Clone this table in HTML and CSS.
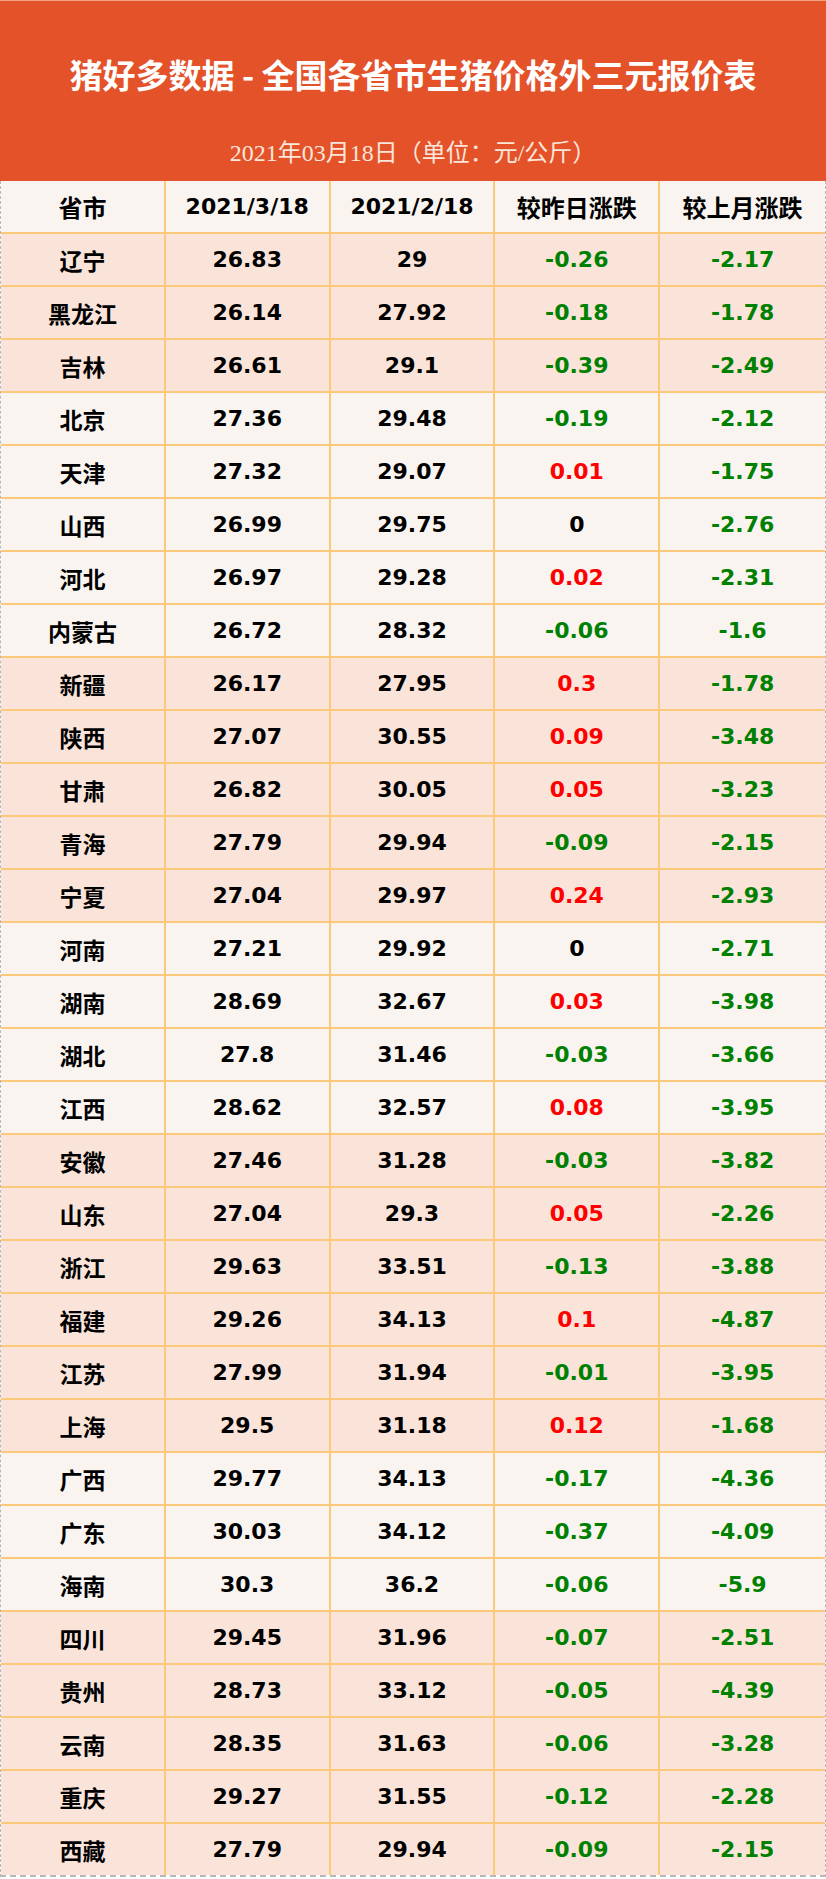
FILE: index.html
```html
<!DOCTYPE html>
<html lang="zh">
<head>
<meta charset="utf-8">
<title>猪好多数据</title>
<link rel="stylesheet" href="styles.css">
</head>
<body>
<div class="page">
  <header class="banner">
    <h1 class="title">猪好多数据 - 全国各省市生猪价格外三元报价表</h1>
    <p class="subtitle">2021年03月18日（单位：元/公斤）</p>
  </header>
  <div class="table">
    <div class="row head"><div class="c p">省市</div><div class="c n">2021/3/18</div><div class="c n">2021/2/18</div><div class="c p">较昨日涨跌</div><div class="c p">较上月涨跌</div></div>
    <div class="row pe"><div class="c p">辽宁</div><div class="c n">26.83</div><div class="c n">29</div><div class="c n g">-0.26</div><div class="c n g">-2.17</div></div>
    <div class="row pe"><div class="c p">黑龙江</div><div class="c n">26.14</div><div class="c n">27.92</div><div class="c n g">-0.18</div><div class="c n g">-1.78</div></div>
    <div class="row pe"><div class="c p">吉林</div><div class="c n">26.61</div><div class="c n">29.1</div><div class="c n g">-0.39</div><div class="c n g">-2.49</div></div>
    <div class="row li"><div class="c p">北京</div><div class="c n">27.36</div><div class="c n">29.48</div><div class="c n g">-0.19</div><div class="c n g">-2.12</div></div>
    <div class="row li"><div class="c p">天津</div><div class="c n">27.32</div><div class="c n">29.07</div><div class="c n r">0.01</div><div class="c n g">-1.75</div></div>
    <div class="row li"><div class="c p">山西</div><div class="c n">26.99</div><div class="c n">29.75</div><div class="c n">0</div><div class="c n g">-2.76</div></div>
    <div class="row li"><div class="c p">河北</div><div class="c n">26.97</div><div class="c n">29.28</div><div class="c n r">0.02</div><div class="c n g">-2.31</div></div>
    <div class="row li"><div class="c p">内蒙古</div><div class="c n">26.72</div><div class="c n">28.32</div><div class="c n g">-0.06</div><div class="c n g">-1.6</div></div>
    <div class="row pe"><div class="c p">新疆</div><div class="c n">26.17</div><div class="c n">27.95</div><div class="c n r">0.3</div><div class="c n g">-1.78</div></div>
    <div class="row pe"><div class="c p">陕西</div><div class="c n">27.07</div><div class="c n">30.55</div><div class="c n r">0.09</div><div class="c n g">-3.48</div></div>
    <div class="row pe"><div class="c p">甘肃</div><div class="c n">26.82</div><div class="c n">30.05</div><div class="c n r">0.05</div><div class="c n g">-3.23</div></div>
    <div class="row pe"><div class="c p">青海</div><div class="c n">27.79</div><div class="c n">29.94</div><div class="c n g">-0.09</div><div class="c n g">-2.15</div></div>
    <div class="row pe"><div class="c p">宁夏</div><div class="c n">27.04</div><div class="c n">29.97</div><div class="c n r">0.24</div><div class="c n g">-2.93</div></div>
    <div class="row li"><div class="c p">河南</div><div class="c n">27.21</div><div class="c n">29.92</div><div class="c n">0</div><div class="c n g">-2.71</div></div>
    <div class="row li"><div class="c p">湖南</div><div class="c n">28.69</div><div class="c n">32.67</div><div class="c n r">0.03</div><div class="c n g">-3.98</div></div>
    <div class="row li"><div class="c p">湖北</div><div class="c n">27.8</div><div class="c n">31.46</div><div class="c n g">-0.03</div><div class="c n g">-3.66</div></div>
    <div class="row li"><div class="c p">江西</div><div class="c n">28.62</div><div class="c n">32.57</div><div class="c n r">0.08</div><div class="c n g">-3.95</div></div>
    <div class="row pe"><div class="c p">安徽</div><div class="c n">27.46</div><div class="c n">31.28</div><div class="c n g">-0.03</div><div class="c n g">-3.82</div></div>
    <div class="row pe"><div class="c p">山东</div><div class="c n">27.04</div><div class="c n">29.3</div><div class="c n r">0.05</div><div class="c n g">-2.26</div></div>
    <div class="row pe"><div class="c p">浙江</div><div class="c n">29.63</div><div class="c n">33.51</div><div class="c n g">-0.13</div><div class="c n g">-3.88</div></div>
    <div class="row pe"><div class="c p">福建</div><div class="c n">29.26</div><div class="c n">34.13</div><div class="c n r">0.1</div><div class="c n g">-4.87</div></div>
    <div class="row pe"><div class="c p">江苏</div><div class="c n">27.99</div><div class="c n">31.94</div><div class="c n g">-0.01</div><div class="c n g">-3.95</div></div>
    <div class="row pe"><div class="c p">上海</div><div class="c n">29.5</div><div class="c n">31.18</div><div class="c n r">0.12</div><div class="c n g">-1.68</div></div>
    <div class="row li"><div class="c p">广西</div><div class="c n">29.77</div><div class="c n">34.13</div><div class="c n g">-0.17</div><div class="c n g">-4.36</div></div>
    <div class="row li"><div class="c p">广东</div><div class="c n">30.03</div><div class="c n">34.12</div><div class="c n g">-0.37</div><div class="c n g">-4.09</div></div>
    <div class="row li"><div class="c p">海南</div><div class="c n">30.3</div><div class="c n">36.2</div><div class="c n g">-0.06</div><div class="c n g">-5.9</div></div>
    <div class="row pe"><div class="c p">四川</div><div class="c n">29.45</div><div class="c n">31.96</div><div class="c n g">-0.07</div><div class="c n g">-2.51</div></div>
    <div class="row pe"><div class="c p">贵州</div><div class="c n">28.73</div><div class="c n">33.12</div><div class="c n g">-0.05</div><div class="c n g">-4.39</div></div>
    <div class="row pe"><div class="c p">云南</div><div class="c n">28.35</div><div class="c n">31.63</div><div class="c n g">-0.06</div><div class="c n g">-3.28</div></div>
    <div class="row pe"><div class="c p">重庆</div><div class="c n">29.27</div><div class="c n">31.55</div><div class="c n g">-0.12</div><div class="c n g">-2.28</div></div>
    <div class="row pe"><div class="c p">西藏</div><div class="c n">27.79</div><div class="c n">29.94</div><div class="c n g">-0.09</div><div class="c n g">-2.15</div></div>
  </div>
</div>
</body>
</html>
```

FILE: styles.css
```css
* { box-sizing: border-box; }
html, body { margin: 0; padding: 0; background: #ffffff; }
.page { width: 826px; }
.banner {
  height: 181px;
  background: #e4522a;
  border-top: 1px solid #f0a283;
  display: flex;
  flex-direction: column;
  align-items: center;
}
.title {
  margin: 52px 0 0 0;
  height: 42px;
  line-height: 42px;
  font-family: "Noto Sans CJK SC", sans-serif;
  font-weight: 700;
  font-size: 33px;
  color: #ffffff;
  white-space: nowrap;
}
.subtitle {
  margin: 43px 0 0 0;
  height: 30px;
  line-height: 30px;
  font-family: "Liberation Serif", "Noto Sans CJK SC", serif;
  font-size: 24px;
  color: #fbe6da;
  white-space: nowrap;
}
.table {
  border-left: 1px dashed #b8b8b8;
  border-right: 1px dashed #b8b8b8;
  border-bottom: 2px dashed #b8b8b8;
}
.row {
  display: grid;
  grid-template-columns: repeat(5, 1fr);
  height: 53px;
  border-bottom: 2px solid #fcc97b;
}
.row:last-child { border-bottom: 0; height: 51px; }
.head, .li { background: #f9f4f0; }
.pe { background: #fae4d9; }
.c {
  display: flex;
  align-items: center;
  justify-content: center;
  border-right: 2px solid #fcc97b;
  color: #000000;
  font-weight: 700;
  white-space: nowrap;
}
.c:last-child { border-right: 0; }
.p {
  font-family: "Noto Sans CJK SC", sans-serif;
  font-size: 23px;
}
.head .p { font-size: 24px; }
.n {
  font-family: "DejaVu Sans", "Noto Sans CJK SC", sans-serif;
  font-size: 22px;
}
.g { color: #008000; }
.r { color: #ff0000; }
```
